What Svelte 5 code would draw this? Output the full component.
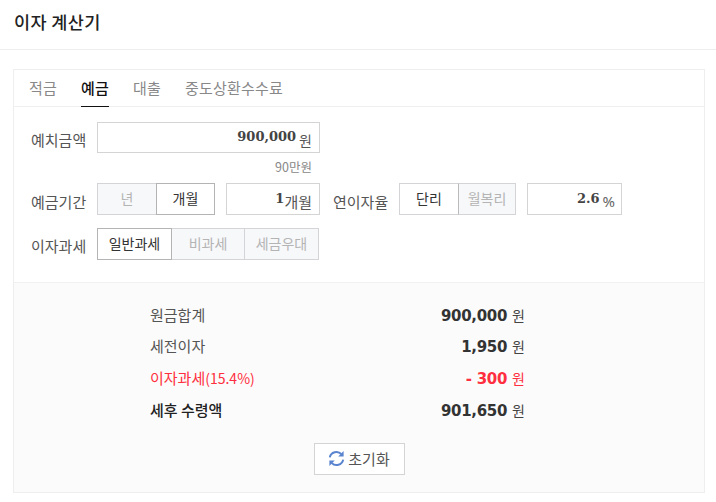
<script>
  const tabs = ['적금', '예금', '대출', '중도상환수수료'];
  const rows = [
    { label: '원금합계', value: '900,000' },
    { label: '세전이자', value: '1,950' },
    { label: '이자과세', sub: '(15.4%)', value: '- 300', cls: 'red' },
    { label: '세후 수령액', value: '901,650', cls: 'strong' }
  ];
</script>

<div class="page">
  <header class="head"><h1>이자 계산기</h1></header>
  <section class="card">
    <nav class="tabs">
      {#each tabs as t, i}
        <span class="tab" class:active={i === 1}>{t}</span>
      {/each}
    </nav>
    <div class="form">
      <div class="row">
        <span class="lab">예치금액</span>
        <div class="input wide"><b>900,000</b><span class="unit">원</span></div>
      </div>
      <div class="hint">90만원</div>
      <div class="row r2">
        <span class="lab">예금기간</span>
        <div class="seg">
          <span class="btn off w60">년</span><span class="btn on w59">개월</span>
        </div>
        <div class="input small m11"><b>1</b><span class="unit tight">개월</span></div>
        <span class="lab second">연이자율</span>
        <div class="seg">
          <span class="btn plain w60">단리</span><span class="btn off w58">월복리</span>
        </div>
        <div class="input rate m11"><b>2.6</b><span class="unit pct">%</span></div>
      </div>
      <div class="row r3">
        <span class="lab">이자과세</span>
        <div class="seg">
          <span class="btn on w75">일반과세</span><span class="btn off w74">비과세</span><span class="btn off w75">세금우대</span>
        </div>
      </div>
    </div>
    <div class="result">
      <ul class="list">
        {#each rows as r}
          <li class={r.cls}>
            <span class="name">{r.label}{#if r.sub}<small>{r.sub}</small>{/if}</span>
            <span class="val"><b>{r.value}</b><i>원</i></span>
          </li>
        {/each}
      </ul>
      <div class="reset-wrap">
        <button class="reset" type="button">
          <svg width="17" height="17" viewBox="0 0 17 17" fill="none" stroke="#5b84cf" stroke-width="2">
            <path d="M1.8 7.4A6.7 6.7 0 0 1 13.4 4.2"/>
            <path d="M15.2 9.6A6.7 6.7 0 0 1 3.6 12.8"/>
            <path d="M15.6 1v5.4h-5.4z" fill="#5b84cf" stroke="none"/>
            <path d="M1.4 16v-5.4h5.4z" fill="#5b84cf" stroke="none"/>
          </svg>
          <span>초기화</span>
        </button>
      </div>
    </div>
  </section>
</div>

<style>
  :global(body) { margin: 0; background: #fff; }
  .page {
    width: 716px;
    height: 502px;
    overflow: hidden;
    font-family: "Noto Sans CJK KR", "Noto Sans", sans-serif;
    font-size: 15px;
    color: #444;
  }
  .head {
    height: 49px;
    border-bottom: 1px solid #eee;
    box-sizing: content-box;
    display: flex;
    align-items: center;
    padding-left: 14px;
  }
  h1 { margin: 0 0 7px; font-size: 17.5px; font-weight: 500; color: #222; letter-spacing: 0.4px; }
  .card {
    margin: 19px 0 0 13px;
    width: 692px;
    height: 424px;
    box-sizing: border-box;
    border: 1px solid #eee;
    display: flex;
    flex-direction: column;
  }
  .tabs {
    height: 36px;
    border-bottom: 1px solid #f0f0f0;
    display: flex;
    gap: 24px;
    padding-left: 15px;
    flex: none;
  }
  .tab {
    height: 37px;
    box-sizing: border-box;
    line-height: 35px;
    font-size: 15px;
    letter-spacing: 0.2px;
    color: #888;
  }
  .tab.active { color: #111; font-weight: 500; border-bottom: 1px solid #111; }
  .form { padding: 15px 0 0 17px; flex: none; height: 175px; box-sizing: border-box; }
  .row { display: flex; align-items: center; }
  .lab { width: 66px; font-size: 15px; color: #555; padding-top: 4px; flex: none; line-height: 20px; }
  .r2 .lab { padding-top: 6px; }
  .lab.second { width: 66px; margin-left: 13px; }
  .input {
    height: 32px;
    box-sizing: border-box;
    border: 1px solid #d4d4d4;
    display: flex;
    align-items: center;
    justify-content: flex-end;
    background: #fff;
    padding-right: 7px;
    line-height: 1;
  }
  .input b {
    font-family: "DejaVu Serif", serif;
    font-size: 13px;
    font-weight: 700;
    color: #444;
    margin-top: -2px;
  }
  .unit { font-size: 14px; color: #555; margin-left: 3px; margin-top: 4px; }
  .unit.tight { margin-left: 0; font-size: 15px; }
  .unit.pct { font-size: 15px; margin-left: 3px; margin-right: -1px; font-family: "Noto Sans", sans-serif; color: #666; }
  .wide { width: 223px; height: 31px; }
  .small { width: 94px; }
  .rate { width: 95px; }
  .m11 { margin-left: 11px; }
  .hint { text-align: right; width: 281px; font-size: 12.5px; color: #888; line-height: 16px; margin-top: 6px; }
  .r2 { margin-top: 8px; }
  .r3 { margin-top: 13px; }
  .seg { display: flex; }
  .btn {
    height: 32px;
    box-sizing: border-box;
    display: flex;
    align-items: center;
    justify-content: center;
    font-size: 14px;
    border: 1px solid #d4d4d8;
    padding-bottom: 2px;
  }
  .btn + .btn { margin-left: -1px; }
  .off { background: #f7f8fa; color: #b4b4b4; }
  .on { background: #fff; color: #333; border-color: #b4b4b4; position: relative; z-index: 1; }
  .plain { background: #fff; color: #333; }
  .plain + .off { border-left-color: #bbb; }
  .w60 { width: 60px; }
  .w59 { width: 59px; }
  .w58 { width: 58px; }
  .w75 { width: 75px; }
  .w74 { width: 74px; }
  .result {
    flex: 1;
    border-top: 1px solid #f0f0f0;
    background: #fbfbfb;
    display: flex;
    flex-direction: column;
  }
  .list { list-style: none; margin: 0; padding: 17px 179px 0 136px; }
  .list li {
    height: 31.67px;
    display: flex;
    justify-content: space-between;
    align-items: center;
    color: #555;
  }
  .name { font-size: 15px; margin-top: -3px; }
  .name small { font-size: 14px; }
  .val b {
    font-family: "DejaVu Sans", sans-serif;
    font-size: 15px;
    font-weight: 700;
    letter-spacing: -0.3px;
    color: #333;
  }
  .val i { font-style: normal; font-size: 14px; color: #444; margin: -2px 0 0 5px; }
  .val { display: flex; align-items: center; }
  li.red .name, li.red .val b, li.red .val i { color: #ff2f40; }
  li.strong .name { color: #222; font-weight: 500; }
  .reset-wrap { display: flex; justify-content: center; margin-top: 16px; }
  .reset {
    width: 91px;
    height: 32px;
    padding: 0;
    background: #fff;
    border: 1px solid #d4d4d4;
    display: flex;
    align-items: center;
    justify-content: center;
    gap: 3px;
    font-family: inherit;
    font-size: 15px;
    color: #555;
  }
</style>
